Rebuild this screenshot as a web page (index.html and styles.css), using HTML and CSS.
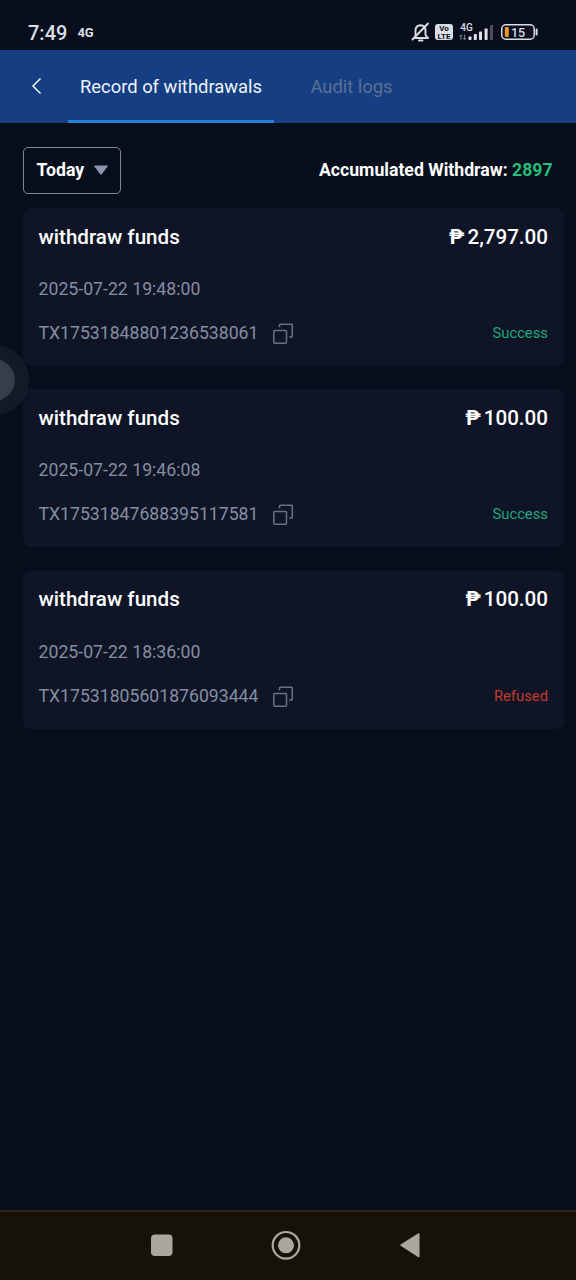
FILE: index.html
```html
<!DOCTYPE html>
<html lang="en">
<head>
<meta charset="utf-8">
<title>Record of withdrawals</title>
<link rel="stylesheet" href="styles.css">
</head>
<body>
<div class="screen">
  <div class="status">
    <span class="clock">7:49</span><span class="net">4G</span>
    <svg class="sys" width="130" height="24" viewBox="0 0 130 24">
      <g fill="none" stroke="#dcdee6" stroke-width="1.9" stroke-linecap="round" stroke-linejoin="round">
        <path d="M5.5 16V10.5Q5.500 5.500 10.500 5.200Q15.500 5.500 15.500 10.500V15L18 18H4.500"/>
        <path d="M2.500 19.500L18 3.500"/><path d="M9 20.500H12.500"/>
      </g>
      <rect x="25" y="4" width="18" height="16" rx="3" fill="#dcdee6"/>
      <text x="34" y="11.300" class="volte">Vo</text><text x="34" y="18.500" class="volte">LTE</text>
      <text x="50.300" y="11" class="sig">4G</text>
      <g fill="none" stroke="#777c89" stroke-width="1"><path d="M51 20V15M49.500 16.500L51 14.700L52.500 16.500M54.500 14.500V19.500M53 18L54.500 19.800L56 18"/></g>
      <g fill="#e1e3ea"><rect x="58.500" y="16.500" width="3" height="3.500" rx=".8"/><rect x="63.800" y="14" width="3" height="6" rx=".8"/><rect x="69" y="11.500" width="3" height="8.500" rx=".8"/><rect x="74.600" y="8.500" width="3" height="11.500" rx=".8"/></g>
      <rect x="80" y="5" width="3" height="15" rx=".8" fill="#4c505c"/>
      <rect x="91.800" y="4.800" width="32.400" height="14.400" rx="4" fill="none" stroke="#dcdee6" stroke-width="1.500"/>
      <path d="M126.600 9.500V14.500" stroke="#dcdee6" stroke-width="2" stroke-linecap="round"/>
      <rect x="94.800" y="7" width="4" height="10" rx="1" fill="#e79a27"/>
      <text x="108" y="16.600" class="bat">15</text>
    </svg>
  </div>
  <nav class="tabs">
    <svg class="back" width="12" height="18" viewBox="0 0 12 18"><path d="M9.500 1.500L2 9L9.500 16.500" fill="none" stroke="#f2f5fa" stroke-width="1.500"/></svg>
    <div class="tab active"><span>Record of withdrawals</span></div>
    <div class="tab muted"><span>Audit logs</span></div>
  </nav>
  <main class="content">
    <div class="filter">
      <div class="select"><span>Today</span><svg width="16" height="11" viewBox="0 0 16 11"><path d="M1.500 1H14.500L8 9.500Z" fill="#8c93b0" stroke="#8c93b0" stroke-linejoin="round"/></svg></div>
      <div class="total">Accumulated Withdraw: <b>2897</b></div>
    </div>
    <section class="card">
      <div class="head"><span>withdraw funds</span><span class="amount"><i>₱</i>2,797.00</span></div>
      <div class="date">2025-07-22 19:48:00</div>
      <div class="foot"><span class="tx">TX17531848801236538061</span><svg class="copy" width="22" height="22" viewBox="0 0 22 22"><rect x="1.800" y="7.500" width="12.700" height="12.700" rx="1"/><path d="M7.500 4.300V2Q7.500 1.300 8.300 1.300H19.500Q20.300 1.300 20.300 2V13.300Q20.300 14 19.500 14H17.300"/></svg><span class="state ok">Success</span></div>
    </section>
    <section class="card">
      <div class="head"><span>withdraw funds</span><span class="amount"><i>₱</i>100.00</span></div>
      <div class="date">2025-07-22 19:46:08</div>
      <div class="foot"><span class="tx">TX17531847688395117581</span><svg class="copy" width="22" height="22" viewBox="0 0 22 22"><rect x="1.800" y="7.500" width="12.700" height="12.700" rx="1"/><path d="M7.500 4.300V2Q7.500 1.300 8.300 1.300H19.500Q20.300 1.300 20.300 2V13.300Q20.300 14 19.500 14H17.300"/></svg><span class="state ok">Success</span></div>
    </section>
    <section class="card">
      <div class="head"><span>withdraw funds</span><span class="amount"><i>₱</i>100.00</span></div>
      <div class="date">2025-07-22 18:36:00</div>
      <div class="foot"><span class="tx">TX17531805601876093444</span><svg class="copy" width="22" height="22" viewBox="0 0 22 22"><rect x="1.800" y="7.500" width="12.700" height="12.700" rx="1"/><path d="M7.500 4.300V2Q7.500 1.300 8.300 1.300H19.500Q20.300 1.300 20.300 2V13.300Q20.300 14 19.500 14H17.300"/></svg><span class="state bad">Refused</span></div>
    </section>
  </main>
  <footer class="navbar">
    <svg width="576" height="68" viewBox="0 0 576 68" fill="#a9a79f">
      <rect x="151" y="22.500" width="21.500" height="21.500" rx="4"/>
      <circle cx="286" cy="33.300" r="13.300" fill="none" stroke="#a9a79f" stroke-width="2.200"/><circle cx="286" cy="33.300" r="8"/>
      <path d="M401 33.200L418.800 22V44.500Z" stroke="#a9a79f" stroke-width="1.500" stroke-linejoin="round"/>
    </svg>
  </footer>
  <div class="bubble"></div>
</div>
</body>
</html>
```
FILE: styles.css
```css
* { box-sizing: border-box; }
body { margin: 0; background: #070e1c; font-family: Roboto, "Liberation Sans", sans-serif; }
svg { display: block; flex: none; }
.screen { position: relative; width: 576px; height: 1280px; display: flex; flex-direction: column; overflow: hidden; background: #070e1c; color: #fff; }
.status { height: 50px; padding: 16px 36px 0 28px; display: flex; align-items: center; flex: none; color: #dcdee6; background: #080e1c; }
.clock { font-size: 20px; font-weight: 500; line-height: 24px; }
.net { font-size: 13px; font-weight: 700; margin: -2px 0 0 10px; }
.sys { margin: -2px 0 0 auto; }
.volte { font-size: 8px; font-weight: 700; fill: #0b1120; text-anchor: middle; }
.sig { font-size: 10px; font-weight: 500; fill: #dcdee6; }
.bat { font-size: 12.5px; font-weight: 500; fill: #dcdee6; text-anchor: middle; }
.tabs { height: 73px; flex: none; display: flex; align-items: center; background: #153f82; font-size: 18.4px; }
.back { margin: -1px 0 0 30.500px; }
.tab { height: 73px; padding-top: 2px; display: flex; align-items: center; justify-content: center; border-bottom: 3px solid transparent; }
.active { width: 206px; margin-left: 25.500px; border-color: #2581d6; color: #eef3fb; }
.muted { width: 155px; color: #5c6f94; }
.content { flex: 1; padding: 24px 12px 0 23px; }
.filter { display: flex; height: 47px; justify-content: space-between; align-items: center; padding-right: 11.500px; }
.select { width: 98px; height: 47px; border: 1px solid #7f8696; border-radius: 5px; display: flex; align-items: center; justify-content: space-between; padding: 0 11px 2px 12.500px; font-size: 17.700px; font-weight: 700; }
.select svg { margin-top: 2px; }
.total { font-size: 17.650px; font-weight: 700; padding-bottom: 2px; }
.total b { color: #27bd78; font-weight: 700; }
.card { height: 158px; margin-top: 14px; padding: 14.500px 16px 0 15.500px; border-radius: 8px; background: #0f1526; }
.card + .card { margin-top: 23.300px; }
.head { height: 28px; display: flex; justify-content: space-between; align-items: center; font-size: 20.600px; font-weight: 500; }
.amount i { font-style: normal; font-weight: 700; margin-right: 3px; }
.date { margin-top: 26.500px; height: 24px; line-height: 24px; font-size: 17.700px; color: #858da2; }
.foot { margin-top: 19px; height: 26px; display: flex; align-items: center; }
.tx { font-size: 17.650px; color: #858da2; }
.copy { margin: 2px 0 0 14px; fill: none; stroke: #697184; stroke-width: 1.500; }
.state { margin-left: auto; font-size: 14.800px; }
.ok { color: #20a77b; }
.bad { color: #c33b2b; }
.navbar { height: 70px; border-top: 2px solid #2e211c; background: #161209; flex: none; }
.bubble { position: absolute; left: -41px; top: 345px; width: 70px; height: 70px; border-radius: 50%; border: 14px solid rgba(40, 46, 59, .35); background: #373d49; background-clip: padding-box; }
```
